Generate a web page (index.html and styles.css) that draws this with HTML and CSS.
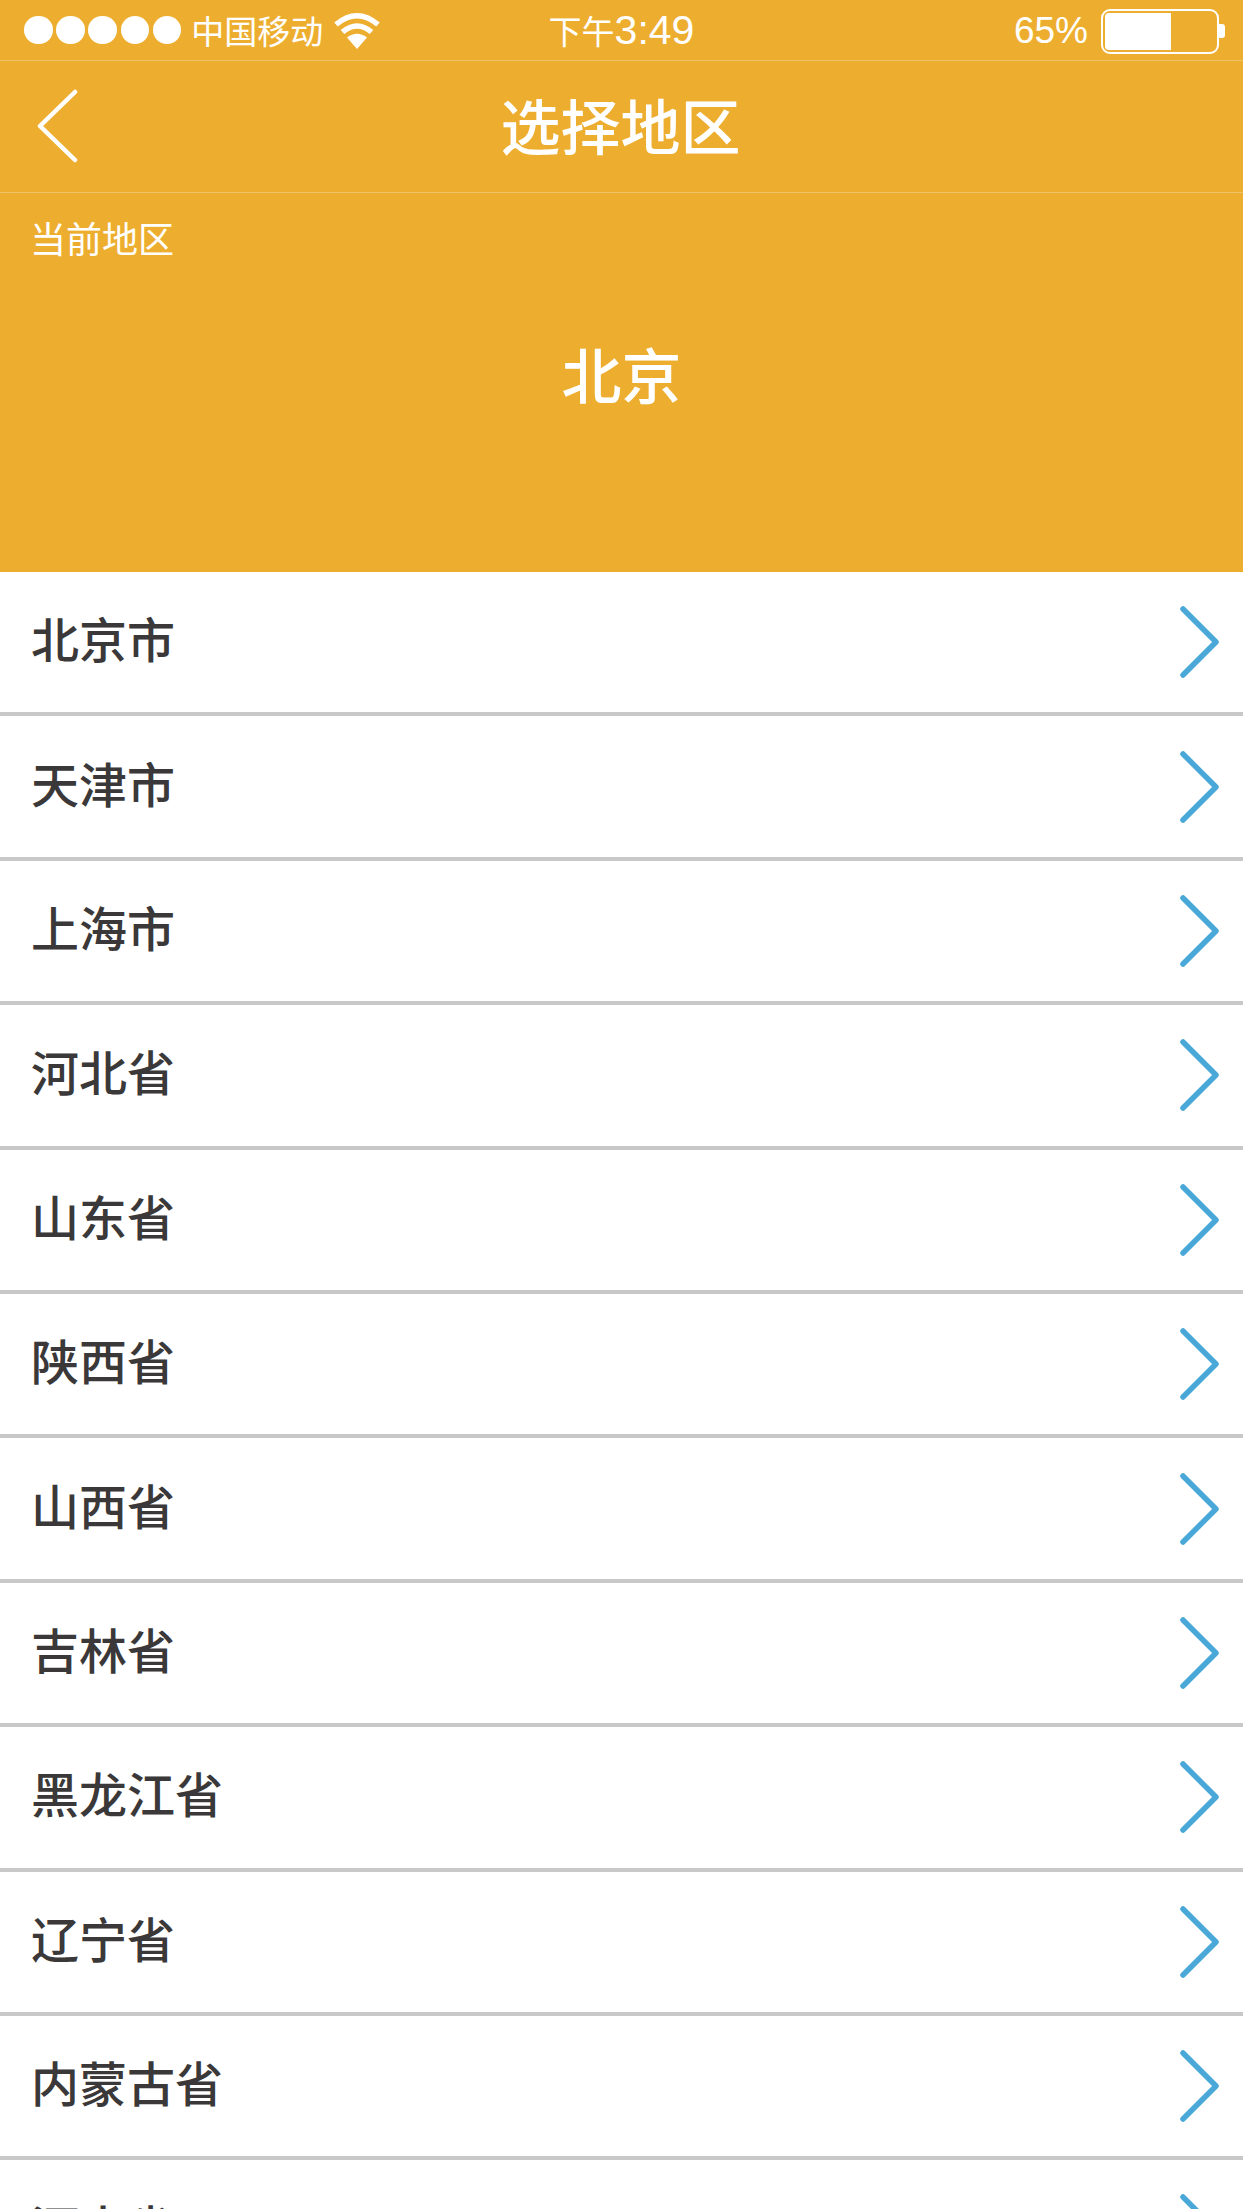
FILE: index.html
```html
<!DOCTYPE html>
<html lang="zh-CN">
<head>
    <meta charset="UTF-8">
    <meta name="viewport" content="width=device-width, initial-scale=1.0">
    <title>选择地区</title>
    <link rel="stylesheet" href="styles.css">
</head>
<body>
    <svg class="defs" width="0" height="0">
        <symbol id="chevron" viewBox="0 0 40 74">
            <path d="M4 4 L37 37 L4 70" fill="none" stroke="#4aa8d8" stroke-width="5.5" stroke-linecap="round" stroke-linejoin="round"/>
        </symbol>
    </svg>
    <header class="top">
        <div class="status">
            <div class="status-left">
                <div class="dots"><i></i><i></i><i></i><i></i><i></i></div>
                <span class="carrier">中国移动</span>
                <svg class="wifi" width="46" height="38" viewBox="0 0 46 38">
                    <path d="M23 37 L13 25.5 Q23 18 33 25.5 Z" fill="#fff"/>
                    <path d="M8.5 20 Q23 8 37.5 20" fill="none" stroke="#fff" stroke-width="5.5"/>
                    <path d="M2 12.5 Q23 -5 44 12.5" fill="none" stroke="#fff" stroke-width="5.5"/>
                </svg>
            </div>
            <span class="time">下午<span class="time-digits">3:49</span></span>
            <div class="status-right">
                <span class="percent">65%</span>
                <div class="battery"><div class="battery-fill"></div></div>
                <div class="battery-nub"></div>
            </div>
        </div>
        <div class="navbar">
            <svg class="back" width="42" height="74" viewBox="0 0 42 74">
                <path d="M38 3 L3 37 L38 71" fill="none" stroke="#fff" stroke-width="4.5" stroke-linecap="round" stroke-linejoin="round"/>
            </svg>
            <h1>选择地区</h1>
        </div>
        <div class="current">
            <p class="current-label">当前地区</p>
            <p class="current-name">北京</p>
        </div>
    </header>
    <ul class="regions">
        <li><span>北京市</span><svg class="arrow"><use href="#chevron"/></svg></li>
        <li><span>天津市</span><svg class="arrow"><use href="#chevron"/></svg></li>
        <li><span>上海市</span><svg class="arrow"><use href="#chevron"/></svg></li>
        <li><span>河北省</span><svg class="arrow"><use href="#chevron"/></svg></li>
        <li><span>山东省</span><svg class="arrow"><use href="#chevron"/></svg></li>
        <li><span>陕西省</span><svg class="arrow"><use href="#chevron"/></svg></li>
        <li><span>山西省</span><svg class="arrow"><use href="#chevron"/></svg></li>
        <li><span>吉林省</span><svg class="arrow"><use href="#chevron"/></svg></li>
        <li><span>黑龙江省</span><svg class="arrow"><use href="#chevron"/></svg></li>
        <li><span>辽宁省</span><svg class="arrow"><use href="#chevron"/></svg></li>
        <li><span>内蒙古省</span><svg class="arrow"><use href="#chevron"/></svg></li>
        <li><span>河南省</span><svg class="arrow"><use href="#chevron"/></svg></li>
    </ul>
</body>
</html>
```

FILE: styles.css
```css
html, body {
    margin: 0;
    padding: 0;
    height: 2209px;
    overflow: hidden;
    background-color: #fff;
    font-family: "Noto Sans CJK SC", "Liberation Sans", sans-serif;
}
.defs {
    position: absolute;
}
.top {
    background-color: #edae30;
    color: #fff;
    height: 572px;
}
.status {
    height: 60px;
    border-bottom: 1px solid #f1c167;
    display: grid;
    grid-template-columns: 1fr auto 1fr;
    align-items: center;
}
.status-left {
    display: flex;
    align-items: center;
    padding-left: 24px;
}
.dots {
    display: flex;
    gap: 3.7px;
}
.dots i {
    width: 28.5px;
    height: 28.5px;
    border-radius: 50%;
    background-color: #fff;
}
.carrier {
    font-size: 33px;
    line-height: 60px;
    margin-left: 10px;
}
.wifi {
    margin-left: 11px;
    margin-top: 2px;
}
.time {
    font-size: 33px;
    line-height: 60px;
}
.time-digits {
    font-family: "Liberation Sans", sans-serif;
    font-size: 41px;
}
.status-right {
    display: flex;
    align-items: center;
    justify-content: flex-end;
    padding: 2px 18px 0 0;
}
.percent {
    font-size: 37px;
    font-family: "Liberation Sans", sans-serif;
    margin-right: 13px;
}
.battery {
    width: 118px;
    height: 45px;
    box-sizing: border-box;
    border: 2.5px solid #fff;
    border-radius: 9px;
    padding: 2px;
}
.battery-fill {
    width: 66px;
    height: 100%;
    background-color: #fff;
    border-radius: 4px 0 0 4px;
}
.battery-nub {
    width: 6px;
    height: 14px;
    background-color: #fff;
    border-radius: 0 3px 3px 0;
}
.navbar {
    height: 131px;
    border-bottom: 1px solid #f1c167;
    position: relative;
    display: flex;
    align-items: center;
    justify-content: center;
}
.navbar h1 {
    margin: 0 2px 6px 0;
    font-size: 60px;
    font-weight: 500;
    line-height: 1;
}
.back {
    position: absolute;
    left: 37px;
    top: 28px;
}
.current {
    padding: 22px 0 0 30px;
}
.current-label {
    margin: 0;
    font-size: 36px;
    line-height: 44px;
}
.current-name {
    margin: 74px 30px 0 0;
    font-size: 60px;
    font-weight: 500;
    line-height: 80px;
    text-align: center;
}
.regions {
    list-style: none;
    margin: 0;
    padding: 0;
}
.regions li {
    height: 144.4px;
    box-sizing: border-box;
    border-bottom: 4px solid #c8c8c8;
    display: flex;
    align-items: center;
    justify-content: space-between;
    padding: 0 24px 0 31px;
    font-size: 48px;
    font-weight: 500;
    color: #3a3838;
}
.regions span {
    margin-bottom: 10px;
}
.arrow {
    width: 40px;
    height: 74px;
}
```
